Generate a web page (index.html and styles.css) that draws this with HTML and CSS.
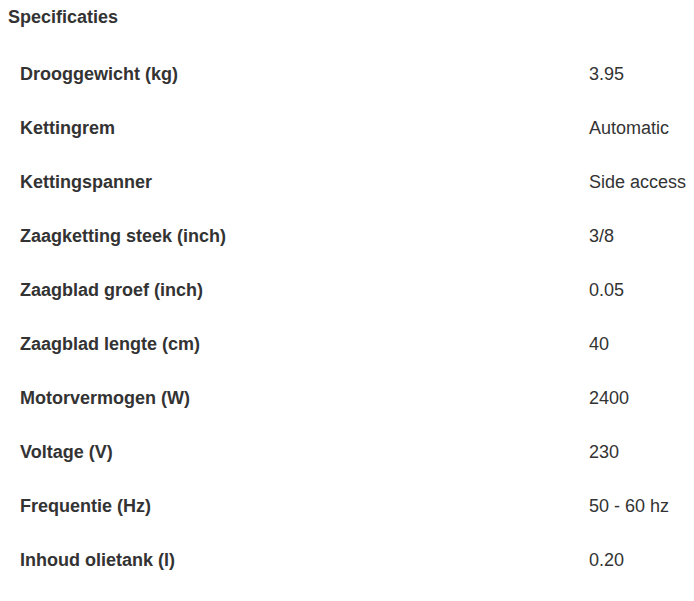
FILE: index.html
```html
<!DOCTYPE html>
<html lang="nl">
<head>
<meta charset="utf-8">
<link rel="stylesheet" href="styles.css">
</head>
<body>
<section class="specs">
  <h2 class="specs-title">Specificaties</h2>
  <dl class="specs-list">
    <div class="spec-row"><dt>Drooggewicht (kg)</dt><dd>3.95</dd></div>
    <div class="spec-row"><dt>Kettingrem</dt><dd>Automatic</dd></div>
    <div class="spec-row"><dt>Kettingspanner</dt><dd>Side access</dd></div>
    <div class="spec-row"><dt>Zaagketting steek (inch)</dt><dd>3/8</dd></div>
    <div class="spec-row"><dt>Zaagblad groef (inch)</dt><dd>0.05</dd></div>
    <div class="spec-row"><dt>Zaagblad lengte (cm)</dt><dd>40</dd></div>
    <div class="spec-row"><dt>Motorvermogen (W)</dt><dd>2400</dd></div>
    <div class="spec-row"><dt>Voltage (V)</dt><dd>230</dd></div>
    <div class="spec-row"><dt>Frequentie (Hz)</dt><dd>50 - 60 hz</dd></div>
    <div class="spec-row"><dt>Inhoud olietank (l)</dt><dd>0.20</dd></div>
  </dl>
</section>
</body>
</html>
```
FILE: styles.css
```css
html, body {
  margin: 0;
  background: #fff;
}
body {
  padding: 7px 8px 8px;
  font-family: "Liberation Sans", Arial, sans-serif;
  color: #333;
  font-size: 18px;
}
.specs-title {
  margin: 0 0 20px;
  font-size: 18px;
  line-height: 20px;
  font-weight: 700;
}
.specs-list {
  margin: 0;
}
.spec-row {
  display: grid;
  grid-template-columns: 569px auto;
  align-items: center;
  height: 54px;
  padding-left: 12px;
  line-height: 20px;
}
.spec-row dt {
  font-weight: 700;
}
.spec-row dd {
  margin: 0;
  white-space: nowrap;
}
```
